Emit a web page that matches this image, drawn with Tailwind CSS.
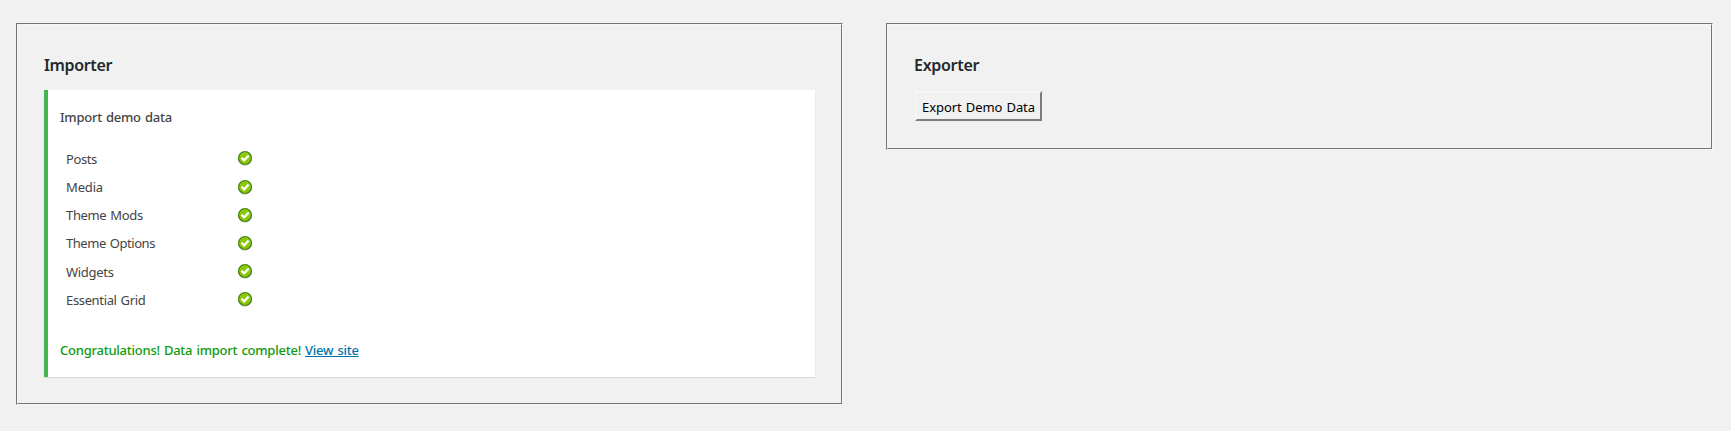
<!DOCTYPE html>
<html lang="en"><head><meta charset="utf-8"><title>Demo data</title>
<script src="https://cdn.jsdelivr.net/npm/@tailwindcss/browser@4"></script></head>
<body class="bg-[#f1f1f1] font-['Noto_Sans','Open_Sans',sans-serif] text-[13px] text-[#444]">
<svg class="hidden"><defs>
<symbol id="ok" viewBox="0 0 16 16"><ellipse cx="8" cy="8.8" rx="7" ry="6.9" fill="#c5cbbd"/><circle cx="8" cy="8" r="7.1" fill="#43850a"/><circle cx="8" cy="8" r="5.7" fill="#a5d444"/><circle cx="8" cy="8.3" r="5.3" fill="#8bc800"/><path d="M4.5 7.7 7.1 10.3 11.6 5.6" fill="none" stroke="#fff" stroke-width="2.3"/></symbol>
</defs></svg>
<main class="flex items-start gap-[43px] pl-4 pt-[23px]">
<section class="h-[382px] w-[827px] border border-t-[#747474] border-l-[#747474] border-r-[#f6f6f6] border-b-[#f6f6f6]">
<div class="h-full border border-t-[#f6f6f6] border-l-[#f6f6f6] border-r-[#747474] border-b-[#747474] pl-[26px] pt-[29px]">
<h2 class="h-[36px] text-base leading-[22px] font-semibold text-[#23282d]"><span class="tracking-[-0.35px]">Importer</span></h2>
<div class="h-[287px] w-[771px] border-l-4 border-[#46b450] bg-white pl-3 pt-[17px] shadow-[0_1px_1px_0_rgba(0,0,0,0.1)]">
<p class="h-[38px] leading-5 font-medium tracking-[-0.25px] [word-spacing:1px]">Import demo data</p>
<ul class="h-[183px] pl-[6px] leading-[28.2px] tracking-[-0.35px] [word-spacing:1px]">
<li class="flex h-[28px]"><span class="w-[171px] tracking-[-0.4px]">Posts</span><svg class="mt-[5px] size-4"><use href="#ok"/></svg></li>
<li class="flex h-[28px]"><span class="w-[171px] tracking-[-0.15px]">Media</span><svg class="mt-[6px] size-4"><use href="#ok"/></svg></li>
<li class="flex h-[28px]"><span class="w-[171px]">Theme Mods</span><svg class="mt-[6px] size-4"><use href="#ok"/></svg></li>
<li class="flex h-[29px]"><span class="w-[171px] tracking-[-0.45px]">Theme Options</span><svg class="mt-[6px] size-4"><use href="#ok"/></svg></li>
<li class="flex h-[28px]"><span class="w-[171px] tracking-[-0.3px]">Widgets</span><svg class="mt-[5px] size-4"><use href="#ok"/></svg></li>
<li class="flex h-[28px]"><span class="w-[171px]">Essential Grid</span><svg class="mt-[5px] size-4"><use href="#ok"/></svg></li>
</ul>
<p class="mt-[12px] leading-5 font-medium tracking-[-0.24px] text-[#0e9a0e] [word-spacing:1px]">Congratulations! Data import complete! <a href="#" class="text-[#0073aa] underline">View site</a></p>
</div></div></section>
<section class="h-[127px] w-[827px] border border-t-[#747474] border-l-[#747474] border-r-[#f6f6f6] border-b-[#f6f6f6]">
<div class="h-full border border-t-[#f6f6f6] border-l-[#f6f6f6] border-r-[#747474] border-b-[#747474] pl-[26px] pt-[29px]">
<h2 class="h-[37px] text-base leading-[22px] font-semibold text-[#23282d]"><span class="tracking-[-0.3px]">Exporter</span></h2>
<button class="ml-px flex h-[30px] w-[127px] items-center justify-center border-2 border-t-[#f6f6f6] border-l-[#f6f6f6] border-r-[#7c7c7c] border-b-[#7c7c7c] pt-[3px] whitespace-nowrap text-black tracking-[-0.1px] [word-spacing:1px]">Export Demo Data</button>
</div></section>
</main></body></html>
